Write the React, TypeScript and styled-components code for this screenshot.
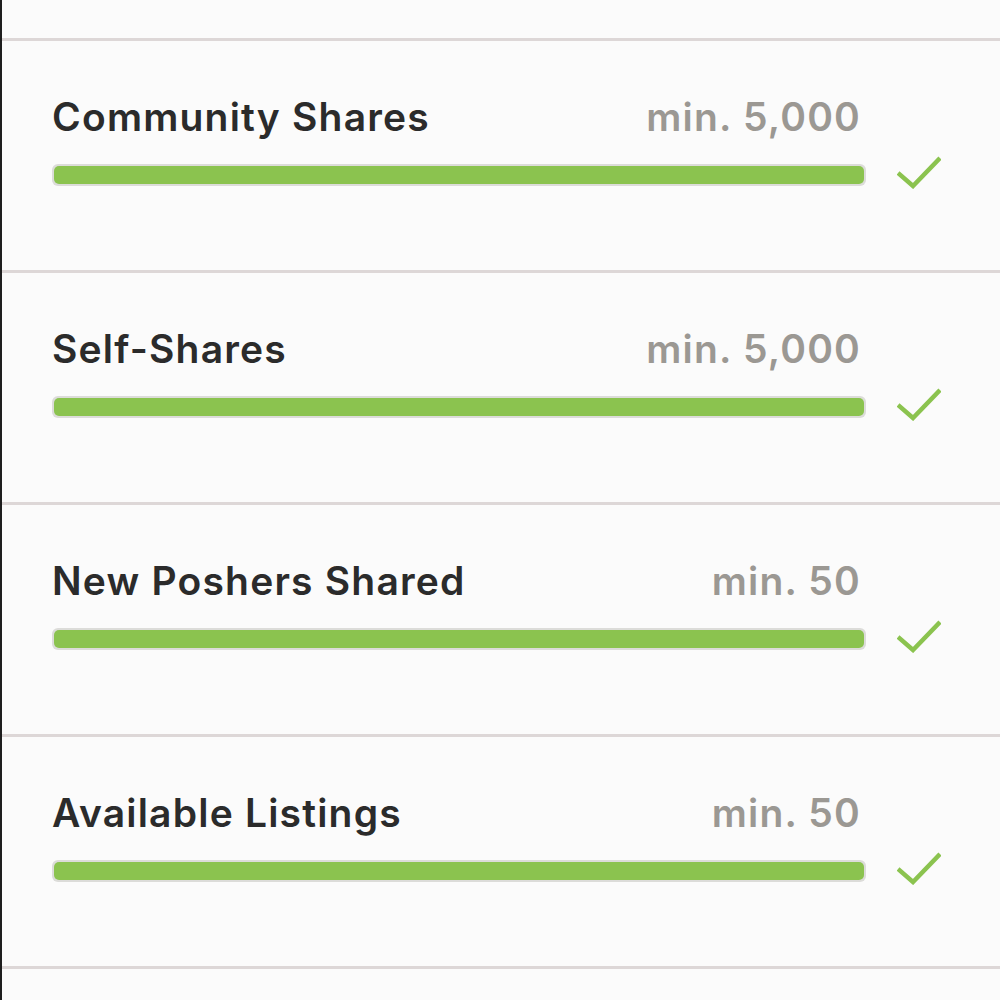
import { FC } from 'react'
import styled, { createGlobalStyle } from 'styled-components'

const GlobalStyle = createGlobalStyle`
  html, body { margin: 0; padding: 0; background: #fbfbfb; }
  body { font-family: 'Inter', 'Lato', 'Liberation Sans', sans-serif; }
`

const Page = styled.main`
  width: 1000px;
  height: 1000px;
  overflow: hidden;
  background: #fbfbfb;
  border-left: 2px solid #1e1e1e;
  box-sizing: border-box;
`

const TopCap = styled.div`
  height: 41px;
  box-sizing: border-box;
  border-bottom: 3px solid #ddd7d7;
`

const Row = styled.section`
  height: 232px;
  box-sizing: border-box;
  border-bottom: 3px solid #ddd7d7;
  padding: 52px 0 0 50px;
  display: grid;
  grid-template-columns: 814px 44px;
  column-gap: 31px;
  align-content: start;
`

const Head = styled.div`
  grid-column: 1 / 2;
  grid-row: 1;
  display: flex;
  justify-content: space-between;
  align-items: baseline;
  padding-right: 5px;
  height: 48px;
  line-height: 48px;
  font-size: 39px;
  font-weight: 600;
  letter-spacing: 1.2px;
`

const Title = styled.span`
  color: #2b2b2b;
`

const Min = styled.span`
  color: #9b9893;
`

const Track = styled.div`
  grid-column: 1 / 2;
  grid-row: 2;
  margin-top: 23px;
  height: 22px;
  border-radius: 6px;
  background: #dcdcd9;
  padding: 2px;
  box-sizing: border-box;
`

const Fill = styled.div`
  height: 100%;
  border-radius: 5px;
  background: #8bc34f;
`

const Check = styled.svg`
  grid-column: 2 / 3;
  grid-row: 2;
  align-self: center;
  margin-top: 14px;
`

const items = [
  { title: 'Community Shares', min: 'min. 5,000', pct: 100 },
  { title: 'Self-Shares', min: 'min. 5,000', pct: 100 },
  { title: 'New Poshers Shared', min: 'min. 50', pct: 100 },
  { title: 'Available Listings', min: 'min. 50', pct: 100 },
]

const App: FC = () => {
  return (
    <>
      <GlobalStyle />
      <Page>
        <TopCap />
        {items.map((it) => (
          <Row key={it.title}>
            <Head>
              <Title>{it.title}</Title>
              <Min>{it.min}</Min>
            </Head>
            <Track>
              <Fill style={{ width: `${it.pct}%` }} />
            </Track>
            <Check width="44" height="34" viewBox="0 0 44 34">
              <polyline points="1,18 16,31 43,3" fill="none" stroke="#8bc34f" strokeWidth="4.5" />
            </Check>
          </Row>
        ))}
      </Page>
    </>
  )
}

export default App
